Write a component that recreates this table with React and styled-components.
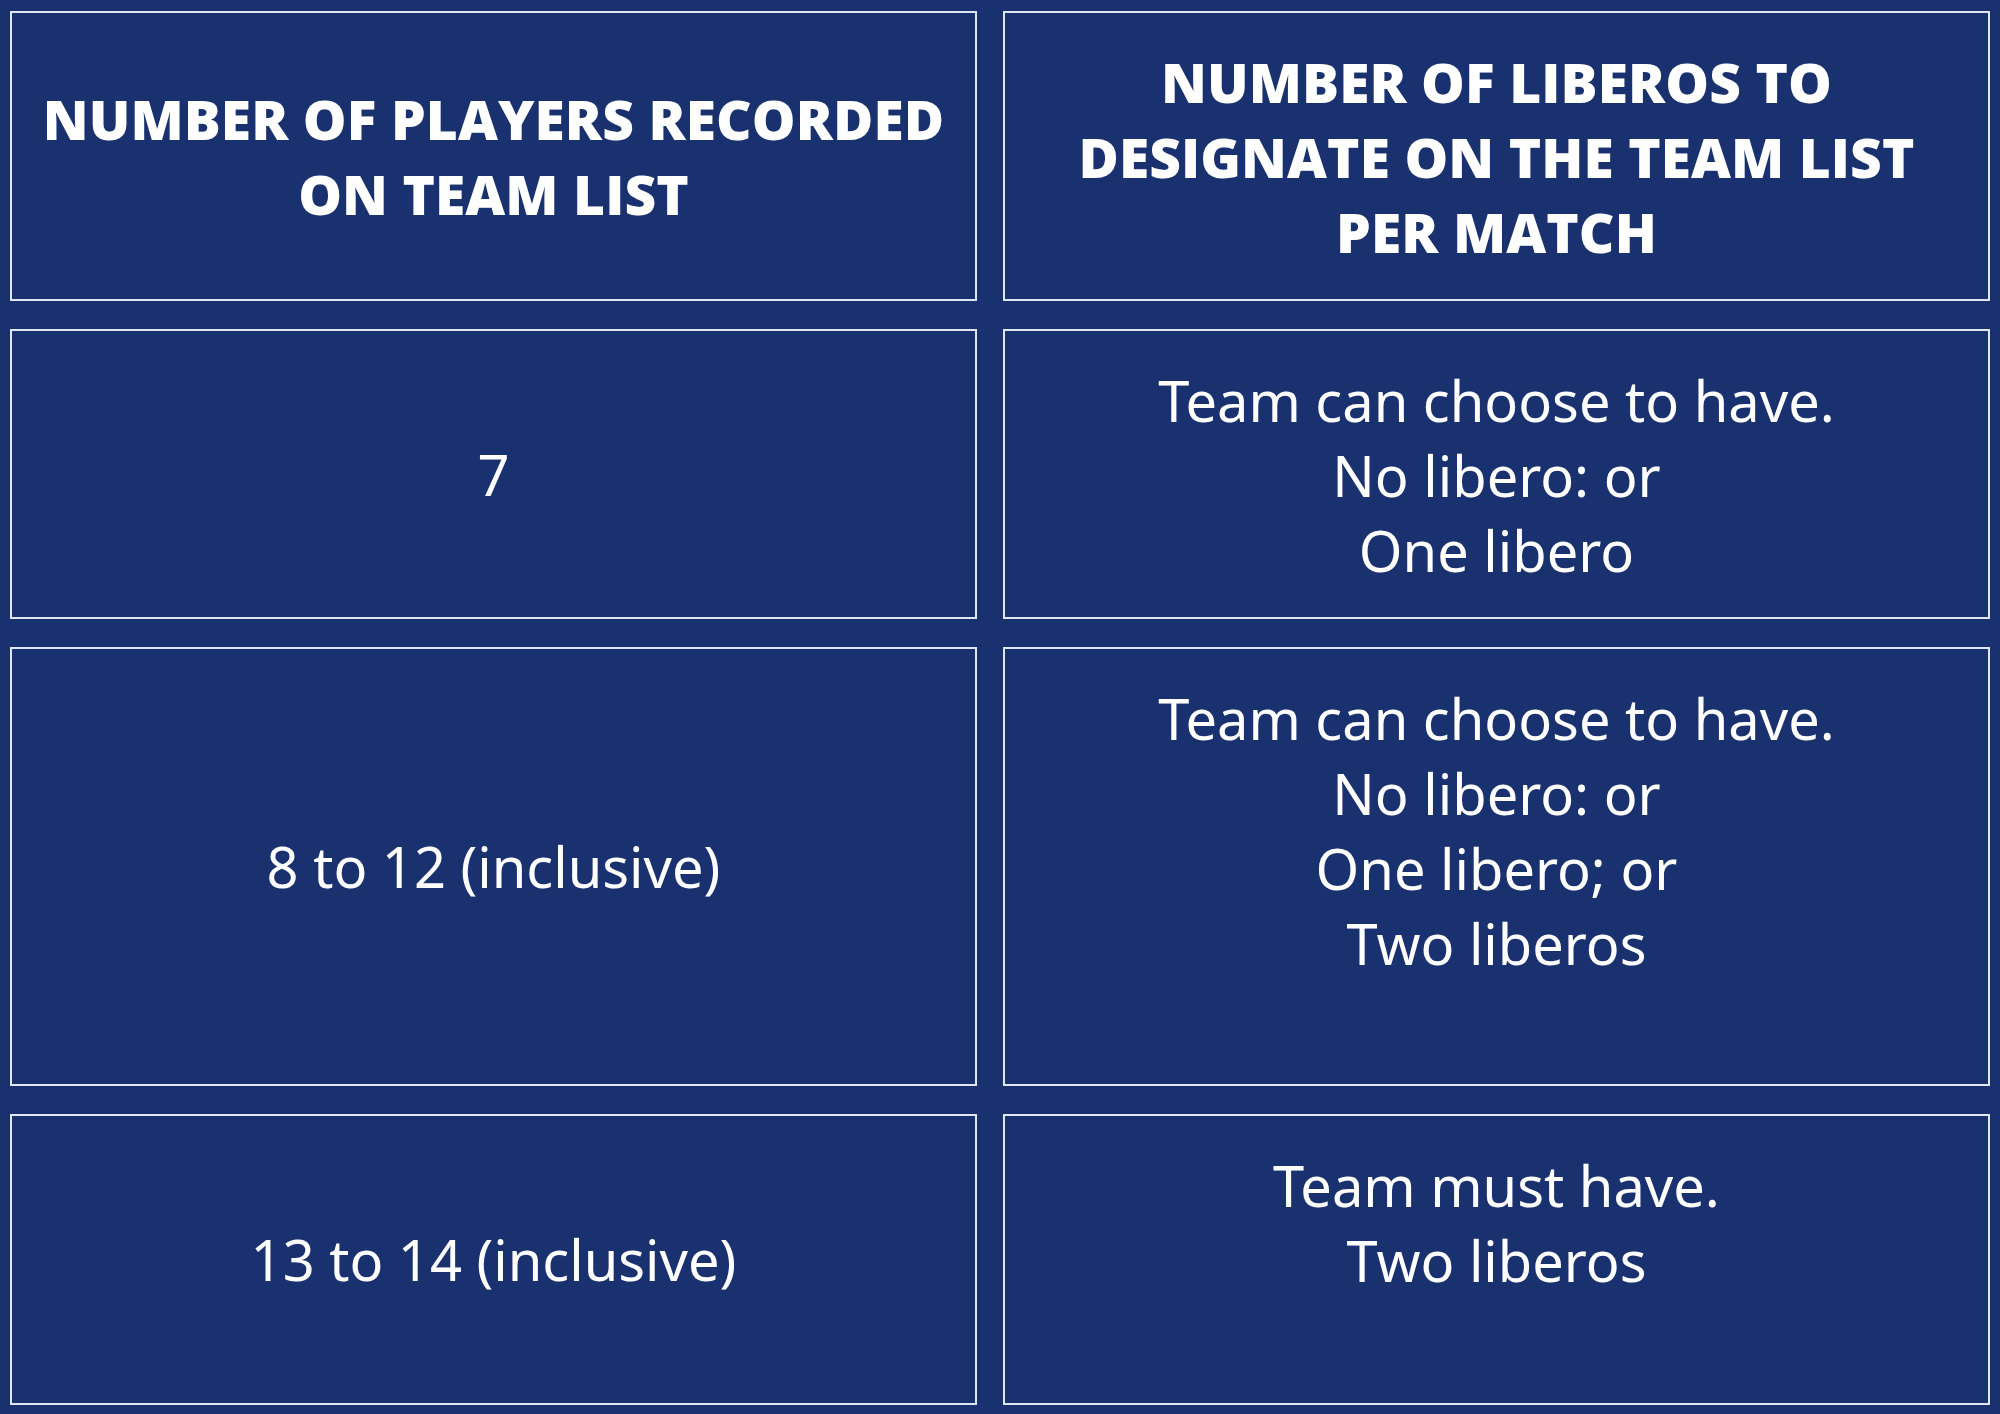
import React from "react";
import styled, {createGlobalStyle} from "styled-components";

const Global = createGlobalStyle`
  html, body {
    margin: 0;
    padding: 0;
    background: #1a3170;
  }
  * {
    box-sizing: border-box;
  }
`;

const Page = styled.div`
  width: 2000px;
  height: 1414px;
  background: #1a3170;
  padding: 11px 10px 0 10px;
`;

const Grid = styled.div`
  display: grid;
  grid-template-columns: 967px 987px;
  grid-template-rows: 290px 290px 439px 291px;
  column-gap: 26px;
  row-gap: 28px;
`;

const Cell = styled.div`
  border: 2px solid #dfe7f4;
  display: flex;
  flex-direction: column;
  align-items: center;
  justify-content: ${(props) => (props.top ? "flex-start" : "center")};
  padding-top: ${(props) => (props.top ? "32px" : "0")};
  text-align: center;
  color: #ffffff;
`;

const Head = styled.div`
  font-family: "Open Sans", "Liberation Sans", sans-serif;
  font-weight: 800;
  font-size: 55px;
  line-height: 75px;
  letter-spacing: 0.1px;
`;

const Body = styled.div`
  font-family: "Noto Sans", "Liberation Sans", sans-serif;
  font-weight: 400;
  font-size: 56px;
  line-height: 75px;
`;

const rows = [
    {left: "7", right: ["Team can choose to have.", "No libero: or", "One libero"]},
    {left: "8 to 12 (inclusive)", right: ["Team can choose to have.", "No libero: or", "One libero; or", "Two liberos"]},
    {left: "13 to 14 (inclusive)", right: ["Team must have.", "Two liberos"]},
];

export default function App() {
    return (<Page>
        <Global/>
        <Grid>
            <Cell>
                <Head>NUMBER OF PLAYERS RECORDED<br/>ON TEAM LIST</Head>
            </Cell>
            <Cell>
                <Head>NUMBER OF LIBEROS TO<br/>DESIGNATE ON THE TEAM LIST<br/>PER MATCH</Head>
            </Cell>
            {rows.map((r, i) => (
                <React.Fragment key={i}>
                    <Cell><Body>{r.left}</Body></Cell>
                    <Cell top>
                        {r.right.map((line) => <Body key={line}>{line}</Body>)}
                    </Cell>
                </React.Fragment>
            ))}
        </Grid>
    </Page>);
}
